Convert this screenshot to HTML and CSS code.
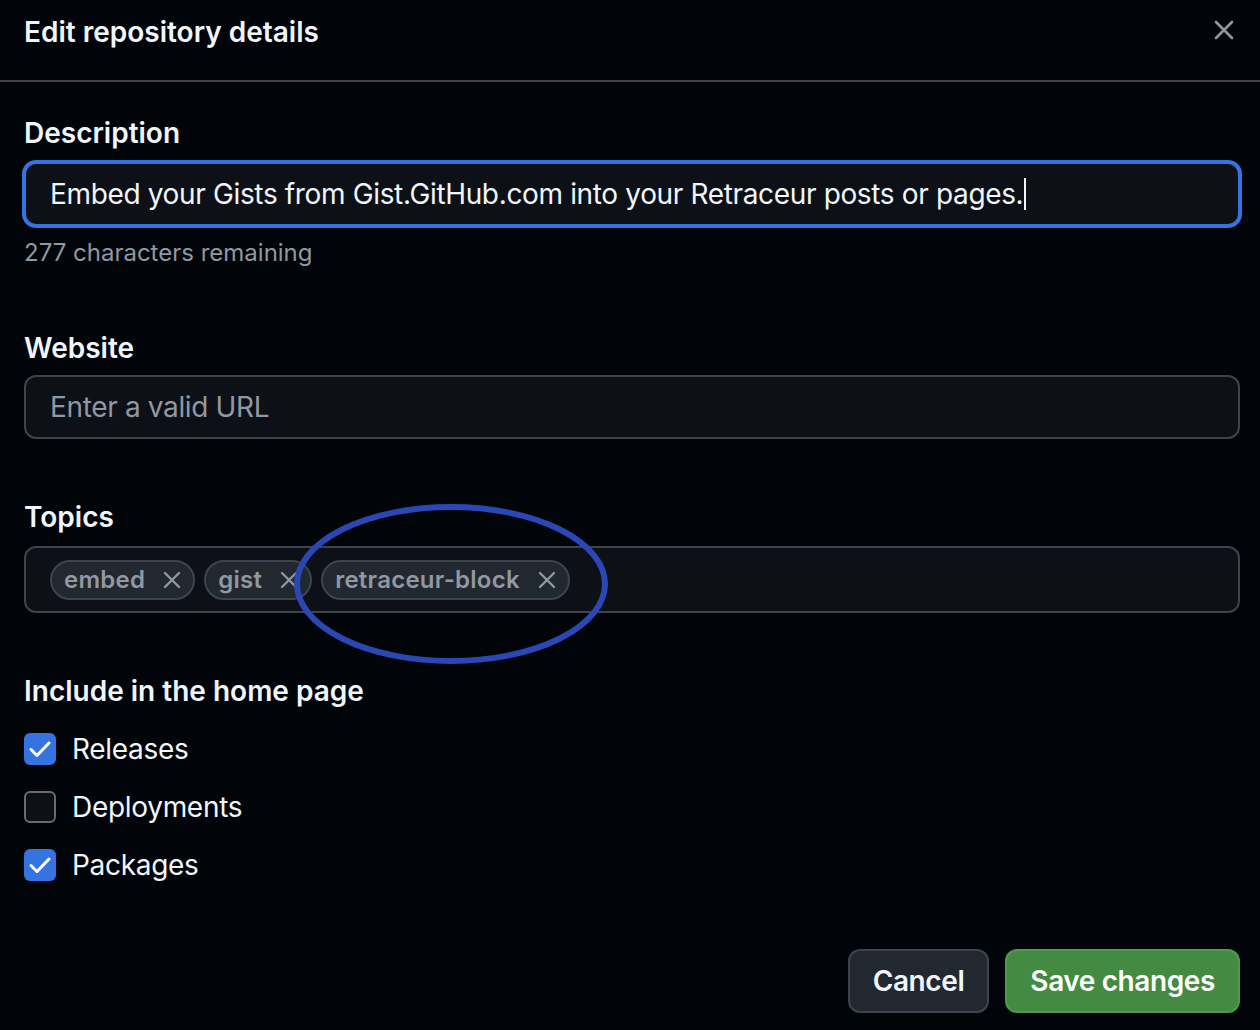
FILE: index.html
```html
<!DOCTYPE html>
<html lang="en">
<head>
  <meta charset="UTF-8" />
  <title>Edit repository details</title>
  <link rel="stylesheet" href="styles.css">
</head>
<body>

<div class="dialog">
  <div class="dialog-header">
    <h1 class="dialog-title">Edit repository details</h1>
    <button class="close-btn" aria-label="Close">
      <svg width="20" height="20" viewBox="0 0 20 20">
        <path d="M2 2 L18 18 M18 2 L2 18" stroke="#9198a1" stroke-width="2.6" stroke-linecap="round" fill="none"/>
      </svg>
    </button>
  </div>

  <div class="dialog-body">
    <div class="group group-desc">
      <label class="field-label">Description</label>
      <div class="text-input focused">
        <span class="value">Embed your Gists from Gist.GitHub.com into your Retraceur posts or pages.</span><span class="caret"></span>
      </div>
      <p class="caption">277 characters remaining</p>
    </div>

    <div class="group group-web">
      <label class="field-label">Website</label>
      <div class="text-input">
        <span class="placeholder">Enter a valid URL</span>
      </div>
    </div>

    <div class="group group-topics">
      <label class="field-label">Topics</label>
      <div class="topics-field">
        <span class="topic">embed <svg class="topic-x" width="18" height="18" viewBox="0 0 18 18"><path d="M2 2 L16 16 M16 2 L2 16" stroke="#9198a1" stroke-width="2.4" stroke-linecap="round"/></svg></span>
        <span class="topic">gist <svg class="topic-x" width="18" height="18" viewBox="0 0 18 18"><path d="M2 2 L16 16 M16 2 L2 16" stroke="#9198a1" stroke-width="2.4" stroke-linecap="round"/></svg></span>
        <span class="topic">retraceur-block <svg class="topic-x" width="18" height="18" viewBox="0 0 18 18"><path d="M2 2 L16 16 M16 2 L2 16" stroke="#9198a1" stroke-width="2.4" stroke-linecap="round"/></svg></span>
        <svg class="annotation" width="320" height="166" viewBox="0 0 320 166">
          <ellipse cx="160" cy="82" rx="154" ry="77" fill="none" stroke="#2a47b3" stroke-width="6"/>
        </svg>
      </div>
    </div>

    <div class="group group-checks">
      <label class="field-label checks-label">Include in the home page</label>
      <div class="check-list">
        <div class="check-row">
          <span class="checkbox checked">
            <svg width="32" height="32" viewBox="0 0 32 32"><path d="M7 16.5 L13 22.5 L25 10" stroke="#fff" stroke-width="3" fill="none" stroke-linecap="round" stroke-linejoin="round"/></svg>
          </span>
          <span class="check-text">Releases</span>
        </div>
        <div class="check-row">
          <span class="checkbox"></span>
          <span class="check-text">Deployments</span>
        </div>
        <div class="check-row">
          <span class="checkbox checked">
            <svg width="32" height="32" viewBox="0 0 32 32"><path d="M7 16.5 L13 22.5 L25 10" stroke="#fff" stroke-width="3" fill="none" stroke-linecap="round" stroke-linejoin="round"/></svg>
          </span>
          <span class="check-text">Packages</span>
        </div>
      </div>
    </div>

    <div class="actions">
      <button class="btn">Cancel</button>
      <button class="btn btn-primary">Save changes</button>
    </div>
  </div>
</div>

</body>
</html>
```

FILE: styles.css
```css
body {
  margin: 0;
  background: #010409;
  color: #f0f6fc;
  font-family: Inter, "Noto Sans", sans-serif;
}

.dialog {
  width: 1260px;
  height: 1030px;
  overflow: hidden;
}

.dialog-header {
  height: 82px;
  box-sizing: border-box;
  display: flex;
  align-items: flex-start;
  padding: 12px 20px 0 24px;
  border-bottom: 2px solid #3d444d;
}

.dialog-title {
  margin: 0;
  font-size: 28px;
  line-height: 40px;
  font-weight: 600;
}

.close-btn {
  margin-left: auto;
  margin-top: 2px;
  width: 32px;
  height: 32px;
  padding: 0;
  border: none;
  background: none;
  display: flex;
  align-items: center;
  justify-content: center;
}

.dialog-body {
  padding: 31px 20px 0 24px;
}

.group {
  margin-bottom: 58px;
}

.group-desc {
  margin-bottom: 59px;
}

.group-checks {
  margin-bottom: 0;
}

.field-label {
  display: block;
  font-size: 28px;
  line-height: 40px;
  font-weight: 600;
  margin-bottom: 9px;
}

.group-web .field-label {
  margin-bottom: 7px;
}

.text-input {
  height: 64px;
  box-sizing: border-box;
  border: 2px solid #3d444d;
  border-radius: 12px;
  background: #0d1117;
  padding: 0 24px;
  display: flex;
  align-items: center;
  font-size: 28px;
  letter-spacing: -0.35px;
}

.text-input.focused {
  border-color: #3574e0;
  box-shadow: 0 0 0 2px #3574e0;
}

.caret {
  display: inline-block;
  width: 2px;
  height: 32px;
  background: #f0f6fc;
  margin-left: 1px;
}

.placeholder {
  color: #9198a1;
}

.caption {
  margin: 11px 0 0;
  font-size: 24px;
  line-height: 32px;
  color: #9198a1;
}

.topics-field {
  position: relative;
  box-sizing: border-box;
  height: 67px;
  border: 2px solid #3d444d;
  border-radius: 12px;
  background: #0d1117;
  padding: 0 24px;
  display: flex;
  align-items: center;
  gap: 9px;
}

.topic {
  display: inline-flex;
  align-items: center;
  height: 40px;
  box-sizing: border-box;
  padding: 0 12px 0 12px;
  border: 2px solid #3d444d;
  border-radius: 20px;
  background: #212830;
  color: #9198a1;
  font-size: 24px;
  font-weight: 600;
  letter-spacing: 0.25px;
}

.topic-x {
  margin-left: 18px;
}

.annotation {
  position: absolute;
  left: 265px;
  top: -46px;
}

.checks-label {
  margin-bottom: 18px;
}

.check-list {
  display: flex;
  flex-direction: column;
  gap: 18px;
}

.check-row {
  display: flex;
  align-items: center;
  gap: 16px;
  height: 40px;
}

.checkbox {
  width: 32px;
  height: 32px;
  box-sizing: border-box;
  border: 2px solid #656c76;
  border-radius: 6px;
  background: #0d1117;
}

.checkbox.checked {
  border: none;
  background: #3574e0;
}

.checkbox svg {
  display: block;
}

.check-text {
  font-size: 28px;
  letter-spacing: -0.3px;
}

.actions {
  display: flex;
  justify-content: flex-end;
  gap: 16px;
  margin-top: 64px;
}

.btn {
  height: 64px;
  padding: 0 23px;
  border: 2px solid #3d444d;
  border-radius: 12px;
  background: #212830;
  color: #f0f6fc;
  font-family: Inter, "Noto Sans", sans-serif;
  font-size: 28px;
  font-weight: 600;
  letter-spacing: -0.4px;
}

.btn-primary {
  background: #438a43;
  border-color: #52994f;
  color: #fff;
}
```
